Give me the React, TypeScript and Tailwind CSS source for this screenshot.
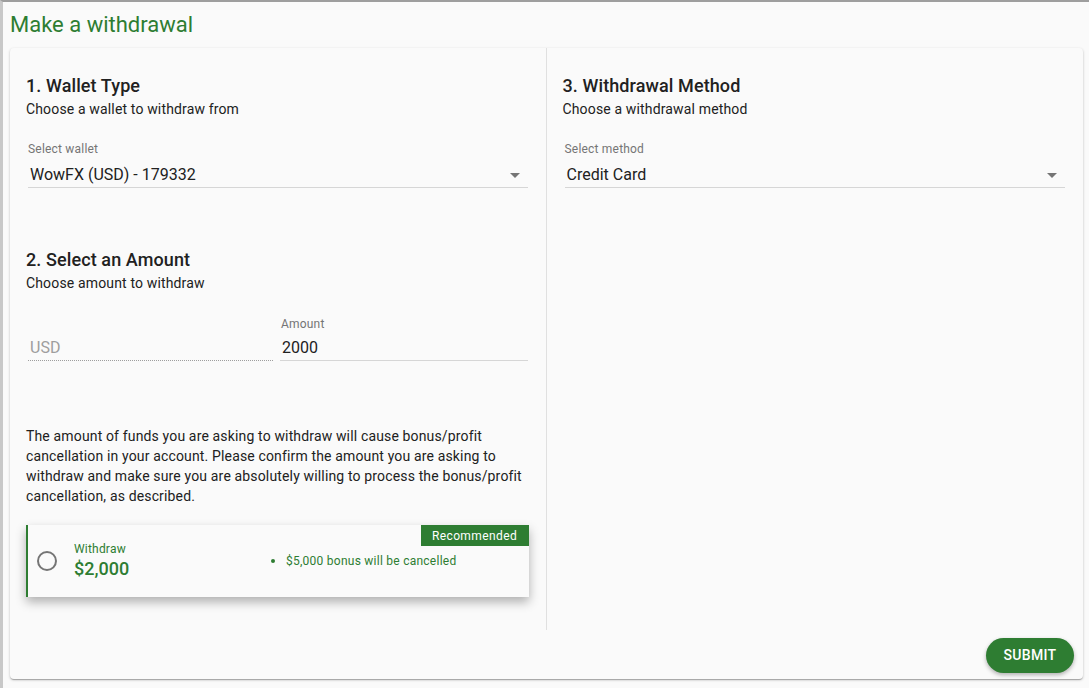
import React from 'react';

const green = 'text-[#2e7d32]';

const ArrowDrop: React.FC = () => (
    <svg width="24" height="24" viewBox="0 0 24 24" className="absolute right-[1px] top-[22px] fill-[#757575]">
        <path d="M7 10l5 5 5-5z" />
    </svg>
);

const SelectField: React.FC<{ label: string; value: string }> = ({ label, value }) => (
    <div className="relative mx-[2px] mt-[22px]">
        <div className="text-[12px] leading-[16px] tracking-[0.2px] text-[#757575]">{label}</div>
        <div className="mt-[6px] border-b border-[#d6d6d6] pl-[2px] text-[16px] leading-[24px] text-[#212121]">{value}</div>
        <ArrowDrop />
    </div>
);

const SectionHead: React.FC<{ title: string; sub: string }> = ({ title, sub }) => (
    <div>
        <h2 className="text-[18px] font-medium leading-[24px] tracking-[0.1px] text-[#212121]">{title}</h2>
        <p className="mt-px text-[14px] leading-[20px] tracking-[0.15px] text-[#212121]">{sub}</p>
    </div>
);

export default function App() {
    return (
        <div
            className="flex h-[688px] w-full border-t-2 border-l-[3px] border-t-[#9e9e9e] border-l-[#c8c8c8] bg-[#fafafa]"
            style={{ fontFamily: 'Roboto, "Noto Sans", sans-serif' }}
        >
            <div className="flex flex-1 flex-col pl-[7px] pr-[6px] pb-[9px]">
                <h1 className={`pt-[9px] text-[22px] leading-[28px] ${green}`}>Make a withdrawal</h1>

                <div className="mt-[9px] flex flex-1 flex-col rounded-[4px] bg-[#fafafa] shadow-[0_1px_3px_rgba(0,0,0,0.2),0_1px_1px_rgba(0,0,0,0.14),0_2px_1px_-1px_rgba(0,0,0,0.12)]">
                    <div className="grid flex-1 grid-cols-2">
                        {/* left column */}
                        <div className="border-r border-[#e0e0e0] px-4 pt-[26px]">
                            <SectionHead title="1. Wallet Type" sub="Choose a wallet to withdraw from" />
                            <SelectField label="Select wallet" value="WowFX (USD) - 179332" />

                            <div className="mt-[60px]">
                                <SectionHead title="2. Select an Amount" sub="Choose amount to withdraw" />
                            </div>

                            <div className="mx-[2px] mt-[23px] flex items-end gap-[7px]">
                                <div className="w-[245px] border-b border-dotted border-[#9e9e9e] pl-[2px] text-[16px] leading-[24px] text-[#9e9e9e]">
                                    USD
                                </div>
                                <div className="flex-1">
                                    <div className="pl-[1px] text-[12px] leading-[16px] tracking-[0.2px] text-[#757575]">Amount</div>
                                    <div className="mt-[4px] border-b border-[#d6d6d6] pl-[2px] text-[16px] leading-[24px] text-[#212121]">2000</div>
                                </div>
                            </div>

                            <p className="mt-[65px] text-[14px] leading-[20px] tracking-[0.15px] text-[#212121]">
                                The amount of funds you are asking to withdraw will cause bonus/profit cancellation in your account. Please confirm the amount you are asking to withdraw and make sure you are absolutely willing to process the bonus/profit cancellation, as described.
                            </p>

                            <div className="relative mt-[19px] mr-[1px] flex h-[72px] items-center border-l-2 border-[#2e7d32] bg-[#fafafa] shadow-[0_5px_10px_rgba(0,0,0,0.3)]">
                                <div className="ml-[9px] h-[20px] w-[20px] rounded-full border-2 border-[#757575]" />
                                <div className="ml-[17px] w-[196px]">
                                    <div className={`text-[12px] leading-[16px] tracking-[0.2px] ${green}`}>Withdraw</div>
                                    <div className={`text-[18px] font-medium leading-[24px] ${green}`}>$2,000</div>
                                </div>
                                <ul className={`flex-1 text-[12px] leading-[16px] tracking-[0.25px] ${green}`}>
                                    <li className="flex items-center">
                                        <span className="mr-[11px] ml-px h-[4px] w-[4px] rounded-full bg-[#2e7d32]" />
                                        $5,000 bonus will be cancelled
                                    </li>
                                </ul>
                                <div className="absolute right-0 top-0 flex h-[21px] w-[108px] items-center justify-center bg-[#2e7d32] text-[12px] tracking-[0.4px] text-white">
                                    Recommended
                                </div>
                            </div>
                        </div>

                        {/* right column */}
                        <div className="px-4 pt-[26px]">
                            <SectionHead title="3. Withdrawal Method" sub="Choose a withdrawal method" />
                            <SelectField label="Select method" value="Credit Card" />
                        </div>
                    </div>

                    <div className="flex justify-end pt-[8px] pb-[6px] pr-[9px]">
                        <button className="h-[35px] w-[88px] rounded-full bg-[#2e7d32] text-[14px] font-medium tracking-[0.3px] text-white shadow-[0_2px_4px_rgba(0,0,0,0.3)]">
                            SUBMIT
                        </button>
                    </div>
                </div>
            </div>
        </div>
    );
}
